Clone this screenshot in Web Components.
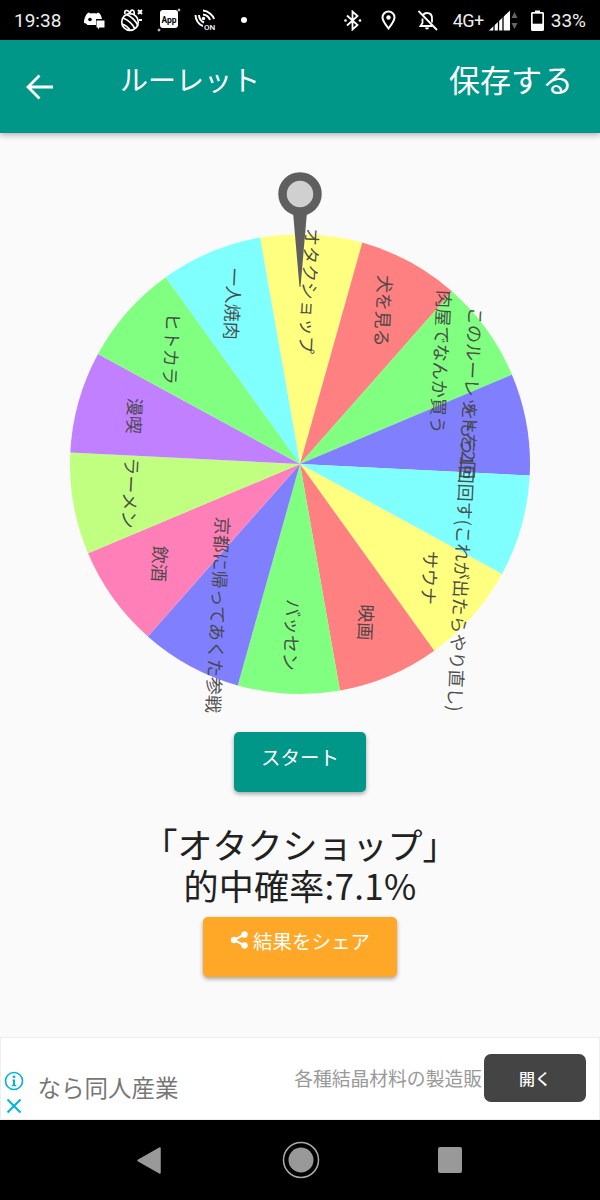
<!DOCTYPE html>
<html lang="ja">
<head>
<meta charset="utf-8">
<title>ルーレット</title>
<style>
  html, body { margin: 0; padding: 0; }
  body {
    width: 600px;
    height: 1200px;
    overflow: hidden;
    display: flex;
    flex-direction: column;
    background: #fafafa;
    font-family: "Noto Sans CJK JP", "Noto Sans", sans-serif;
  }
</style>
</head>
<body>
  <status-bar></status-bar>
  <app-toolbar title-text="ルーレット" action="保存する"></app-toolbar>
  <roulette-wheel></roulette-wheel>
  <action-button color="#009688" width="132" style="margin-top:9px;padding-bottom:11px">スタート</action-button>
  <result-text style="margin-top:31px">
    <span>「オタクショップ」</span>
    <span style="letter-spacing:0.3px">的中確率:7.1%</span>
  </result-text>
  <action-button color="#ffa726" width="194" share style="margin-top:10px;padding-bottom:14px">結果をシェア</action-button>
  <ad-banner></ad-banner>
  <nav-bar></nav-bar>

<script>
// Android status bar, icons drawn by hand
class StatusBar extends HTMLElement {
  constructor() {
    super();
    this.attachShadow({ mode: "open" });
    this.shadowRoot.innerHTML = `
      <style>
        :host {
          display: flex;
          align-items: center;
          flex: none;
          height: 40px;
          padding: 0 14px;
          box-sizing: border-box;
          background: #000;
          color: #eee;
          font-family: Roboto, "Liberation Sans", sans-serif;
        }
        svg { display: block; flex: none; }
        .time { font-size: 19px; width: 49px; }
        .right { display: flex; align-items: center; margin-left: auto; }
        .net { font-size: 18px; margin-left: 15px; width: 36px; letter-spacing: -0.5px; }
        .pct { font-size: 19px; margin-left: 7px; }
      </style>
      <span class="time">19:38</span>

      <svg style="margin-left:20px" width="22" height="20" viewBox="0 0 22 20">
        <path fill="#fff" d="M1 11C2 6 4 3 6 2.500L7.500 3.500C9 3 12 3 13.500 3.500L15 2.500C17 3 18 5 19 9H13V15H4.500L3 13.500L1 13Z"/>
        <circle cx="7" cy="9.500" r="1.800" fill="#000"/>
        <path fill="#fff" d="M13.500 10.500H21.500V17.500H16.500L15 19.500V17.500H13.500Z"/>
      </svg>

      <svg style="margin-left:15px" width="23" height="24" viewBox="0 0 23 24">
        <g fill="none" stroke="#fff" stroke-width="1.700">
          <circle cx="10" cy="14" r="8.300"/>
          <path d="M3 10C8 12 13 17 15 21M6 6.500C11 8 16 13 18 18M2 16C5 17 8 19 10 22"/>
          <path d="M5 6C4 2 7 1 10 5C11 1 15 1 14 7"/>
        </g>
        <path stroke="#fff" stroke-width="2" d="M18 2L22 6M22 2L18 6M19 12H22"/>
      </svg>

      <svg style="margin-left:14px" width="24" height="24" viewBox="0 0 24 24">
        <rect x="3" y="2" width="18" height="18" rx="3" fill="#fff"/>
        <text x="12" y="14.500" text-anchor="middle" font-family="Roboto, sans-serif" font-size="8.500" font-weight="700" fill="#000">App</text>
        <path fill="#fff" d="M22 0L22.600 1.400L24 2L22.600 2.600L22 4L21.400 2.600L20 2L21.400 1.400ZM2 20L2.600 21.400L4 22L2.600 22.600L2 24L1.400 22.600L0 22L1.400 21.400Z"/>
      </svg>

      <svg style="margin-left:13px" width="23" height="22" viewBox="0 0 23 22">
        <g fill="none" stroke="#fff" stroke-width="2">
          <path d="M1.500 6C1.500 11 5 16 9 17"/>
          <path d="M5 6C5 9 7 12.500 10 13.500"/>
          <path d="M9 1.500C14 2 19 6 20 10"/>
          <path d="M9 5.500C12 6 15 8 16 11"/>
        </g>
        <circle cx="9.500" cy="9.500" r="1.700" fill="#fff"/>
        <text x="15.500" y="20.500" text-anchor="middle" font-family="Roboto, sans-serif" font-size="8" font-weight="500" fill="#fff">ON</text>
      </svg>

      <svg style="margin-left:22px" width="10" height="10" viewBox="0 0 10 10"><circle cx="5" cy="5" r="3" fill="#fff"/></svg>

      <div class="right">
        <svg width="18" height="21" viewBox="0 0 18 21">
          <path fill="none" stroke="#fff" stroke-width="1.800" d="M3 5.500L13.500 15L8.500 19.500V1.500L13.500 6L3 15.500"/>
          <circle cx="1.500" cy="10.500" r="1.300" fill="#fff"/><circle cx="16" cy="10.500" r="1.300" fill="#fff"/>
        </svg>
        <svg style="margin-left:19px" width="15" height="20" viewBox="0 0 15 20">
          <path fill="none" stroke="#fff" stroke-width="2" d="M7.500 18.500C4 14 1.500 10.500 1.500 7.500A6 6 0 0 1 13.500 7.500C13.500 10.500 11 14 7.500 18.500Z"/>
          <circle cx="7.500" cy="7.500" r="2.200" fill="#fff"/>
        </svg>
        <svg style="margin-left:21px" width="21" height="21" viewBox="0 0 21 21">
          <path fill="none" stroke="#fff" stroke-width="1.800" d="M6 5.500C6.500 4 8 3 10 3C13 3 15 5 15 8.500V12.500M5.500 8.500V13L3.500 16H15.500"/>
          <path fill="#fff" d="M8 17.500H12C12 20 8 20 8 17.500Z"/>
          <path stroke="#fff" stroke-width="1.800" d="M1.500 1L20 20"/>
        </svg>
        <span class="net">4G+</span>
        <svg width="29" height="21" viewBox="0 0 29 21">
          <path fill="#fff" d="M0 20.500L21 0.500V20.500Z"/>
          <path stroke="#000" stroke-width="1.300" d="M5 21V14M9.500 21V10M14 21V6"/>
          <path fill="#666" d="M25.500 2L28.500 8H22.500ZM25.500 19L22.500 13H28.500Z"/>
        </svg>
        <svg style="margin-left:13px" width="13" height="21" viewBox="0 0 13 21">
          <path fill="#fff" d="M4 0.500H9V2H11.500C12.300 2 13 2.700 13 3.500V19.500C13 20.300 12.300 21 11.500 21H1.500C0.700 21 0 20.300 0 19.500V3.500C0 2.700 0.700 2 1.500 2H4Z"/>
          <rect x="1.700" y="3.700" width="9.600" height="10" fill="#000"/>
        </svg>
        <span class="pct">33%</span>
      </div>
    `;
  }
}
customElements.define("status-bar", StatusBar);

class AppToolbar extends HTMLElement {
  constructor() {
    super();
    this.attachShadow({ mode: "open" });
    this.shadowRoot.innerHTML = `
      <style>
        :host {
          display: flex;
          align-items: center;
          flex: none;
          height: 93px;
          padding: 0 27px 0 26px;
          box-sizing: border-box;
          background: #009688;
          color: #fff;
          box-shadow: 0 2px 6px rgba(0, 0, 0, 0.3);
          font-family: "Noto Sans CJK JP", sans-serif;
        }
        svg { display: block; flex: none; }
        .title { font-size: 28px; margin-left: 66px; margin-bottom: 16px; }
        .action { font-size: 31px; margin-left: auto; margin-bottom: 16px; }
      </style>
      <svg width="28" height="26" viewBox="0 0 28 26">
        <path fill="none" stroke="#fff" stroke-width="2.800" d="M1.500 13H27M13.500 1.500L2 13L13.500 24.500"/>
      </svg>
      <span class="title"></span>
      <span class="action"></span>
    `;
  }
  connectedCallback() {
    this.shadowRoot.querySelector(".title").textContent = this.getAttribute("title-text");
    this.shadowRoot.querySelector(".action").textContent = this.getAttribute("action");
  }
}
customElements.define("app-toolbar", AppToolbar);

// Wheel: the svg viewBox uses page coordinates so slices and labels stay easy to check
const WHEEL = { cx: 300, cy: 464, r: 230, start: -10, step: 360 / 14, tilt: 92.860 };
const SLICES = ["#ffff80", "#ff8080", "#80ff80", "#8080ff", "#80ffff", "#ffff80", "#ff8080",
                "#80ff80", "#8080ff", "#ff80b8", "#c0ff80", "#c080ff", "#80ff80", "#80ffff"];
const LABELS = [
  ["オタクショップ", 310.500, 291],
  ["犬を見る", 384.500, 311],
  ["肉屋でなんか買う", 442, 362],
  ["このルーレットを2回", 472.700, 393],
  ["をもう1回回す(これが出たらやり直し)", 463.500, 557],
  ["サウナ", 430.700, 578],
  ["映画", 367, 622.500],
  ["バッセン", 293, 635],
  ["京都に帰ってあくた参戦", 219, 615],
  ["飲酒", 160.700, 564],
  ["ラーメン", 131.500, 493],
  ["漫喫", 135.700, 416],
  ["ヒトカラ", 172.700, 349],
  ["一人焼肉", 234, 304],
];

class RouletteWheel extends HTMLElement {
  constructor() {
    super();
    this.attachShadow({ mode: "open" });
    const { cx, cy, r, start, step, tilt } = WHEEL;
    const point = (deg) => {
      const a = (deg - 90) * Math.PI / 180;
      return `${(cx + r * Math.cos(a)).toFixed(2)} ${(cy + r * Math.sin(a)).toFixed(2)}`;
    };
    const slices = SLICES.map((color, i) => {
      const a = start + i * step;
      return `<path fill="${color}" d="M${cx} ${cy}L${point(a)}A${r} ${r} 0 0 1 ${point(a + step)}Z"/>`;
    }).join("");
    const labels = LABELS.map(([text, x, y]) =>
      `<text x="${x}" y="${y}" transform="rotate(${tilt} ${x} ${y})">${text}</text>`).join("");
    this.shadowRoot.innerHTML = `
      <style>
        :host { display: block; flex: none; height: 590px; }
        svg { display: block; }
        text {
          font-family: "Noto Sans CJK JP", sans-serif;
          font-size: 18px;
          fill: #444;
          fill-opacity: 0.95;
          text-anchor: middle;
          dominant-baseline: central;
        }
      </style>
      <svg width="600" height="590" viewBox="0 133 600 590">
        ${slices}
        ${labels}
        <path fill="#5f5f5f" d="M293 212L307 212L300.500 287H299.500Z"/>
        <circle cx="300" cy="194" r="17.500" fill="#d0d0d0" stroke="#5f5f5f" stroke-width="8.500"/>
      </svg>
    `;
  }
}
customElements.define("roulette-wheel", RouletteWheel);

class ActionButton extends HTMLElement {
  constructor() {
    super();
    this.attachShadow({ mode: "open" });
    this.shadowRoot.innerHTML = `
      <style>
        :host {
          display: flex;
          justify-content: center;
          align-items: center;
          align-self: center;
          flex: none;
          gap: 4px;
          height: 60px;
          padding-bottom: 10px;
          box-sizing: border-box;
          border-radius: 5px;
          color: #fff;
          font-family: "Noto Sans CJK JP", sans-serif;
          font-size: 19.500px;
          box-shadow: 0 2px 4px rgba(0, 0, 0, 0.35);
        }
        svg { display: none; flex: none; }
        :host([share]) svg { display: block; }
      </style>
      <svg width="19" height="18" viewBox="0 0 19 18">
        <path fill="none" stroke="#fff" stroke-width="2" d="M14.500 3.500L4 9L14.500 14.500"/>
        <circle cx="14.500" cy="3.500" r="3.200" fill="#fff"/>
        <circle cx="4" cy="9" r="3.200" fill="#fff"/>
        <circle cx="14.500" cy="14.500" r="3.200" fill="#fff"/>
      </svg>
      <slot></slot>
    `;
  }
  connectedCallback() {
    this.style.background = this.getAttribute("color");
    this.style.width = this.getAttribute("width") + "px";
  }
}
customElements.define("action-button", ActionButton);

class ResultText extends HTMLElement {
  constructor() {
    super();
    this.attachShadow({ mode: "open" });
    this.shadowRoot.innerHTML = `
      <style>
        :host {
          display: flex;
          flex-direction: column;
          align-items: center;
          flex: none;
          height: 84px;
          color: #212121;
          font-family: "Noto Sans CJK JP", sans-serif;
          font-size: 35px;
          line-height: 41px;
        }
      </style>
      <slot></slot>
    `;
  }
}
customElements.define("result-text", ResultText);

class AdBanner extends HTMLElement {
  constructor() {
    super();
    this.attachShadow({ mode: "open" });
    this.shadowRoot.innerHTML = `
      <style>
        :host {
          display: flex;
          align-items: center;
          position: relative;
          flex: none;
          height: 83px;
          margin-top: auto;
          padding: 0 13px 0 36.500px;
          box-sizing: border-box;
          background: #fff;
          border: 1.500px solid #eee;
          overflow: hidden;
          font-family: "Noto Sans CJK JP", sans-serif;
        }
        .head { font-size: 23.500px; color: #777; margin-top: 17px; white-space: nowrap; }
        .sub { font-size: 18.800px; color: #999; margin-left: auto; margin-top: -3px; white-space: nowrap; }
        .open {
          display: flex;
          justify-content: center;
          align-items: center;
          flex: none;
          width: 102px;
          height: 48px;
          margin-left: 2px;
          margin-top: -1px;
          border-radius: 7px;
          background: #444;
          color: #fff;
          font-size: 16px;
          font-weight: 500;
        }
        .info, .close { position: absolute; left: 3px; }
        .info { top: 33px; }
        .close { top: 58px; }
      </style>
      <span class="head">なら同人産業</span>
      <span class="sub">各種結晶材料の製造販</span>
      <span class="open">開く</span>
      <svg class="info" width="20" height="20" viewBox="0 0 20 20">
        <circle cx="10" cy="10" r="8.500" fill="none" stroke="#00b4d8" stroke-width="1.600"/>
        <circle cx="10" cy="5.800" r="1.400" fill="#00b4d8"/>
        <path fill="#00b4d8" d="M8.500 8.500H11V14H12.300V15.300H7.800V14H9V9.800H8.500Z"/>
      </svg>
      <svg class="close" width="20" height="20" viewBox="0 0 20 20">
        <path stroke="#00b4d8" stroke-width="2" d="M3.500 3.500L16.500 16.500M16.500 3.500L3.500 16.500"/>
      </svg>
    `;
  }
}
customElements.define("ad-banner", AdBanner);

class NavBar extends HTMLElement {
  constructor() {
    super();
    this.attachShadow({ mode: "open" });
    this.shadowRoot.innerHTML = `
      <style>
        :host {
          display: flex;
          align-items: center;
          flex: none;
          gap: 120px;
          height: 80px;
          padding-left: 137px;
          box-sizing: border-box;
          background: #000;
        }
        svg { display: block; flex: none; }
      </style>
      <svg width="24" height="27" viewBox="0 0 24 27">
        <path fill="#999" stroke="#999" stroke-width="1.500" stroke-linejoin="round" d="M23 1V26L1 13.500Z"/>
      </svg>
      <svg style="margin-left:1px" width="38" height="38" viewBox="0 0 38 38">
        <circle cx="19" cy="19" r="17.500" fill="none" stroke="#aaa" stroke-width="1.500"/>
        <circle cx="19" cy="19" r="12.500" fill="#999"/>
      </svg>
      <svg style="margin-left:-2px" width="24" height="26" viewBox="0 0 24 26">
        <rect width="24" height="26" rx="2" fill="#999"/>
      </svg>
    `;
  }
}
customElements.define("nav-bar", NavBar);
</script>
</body>
</html>
